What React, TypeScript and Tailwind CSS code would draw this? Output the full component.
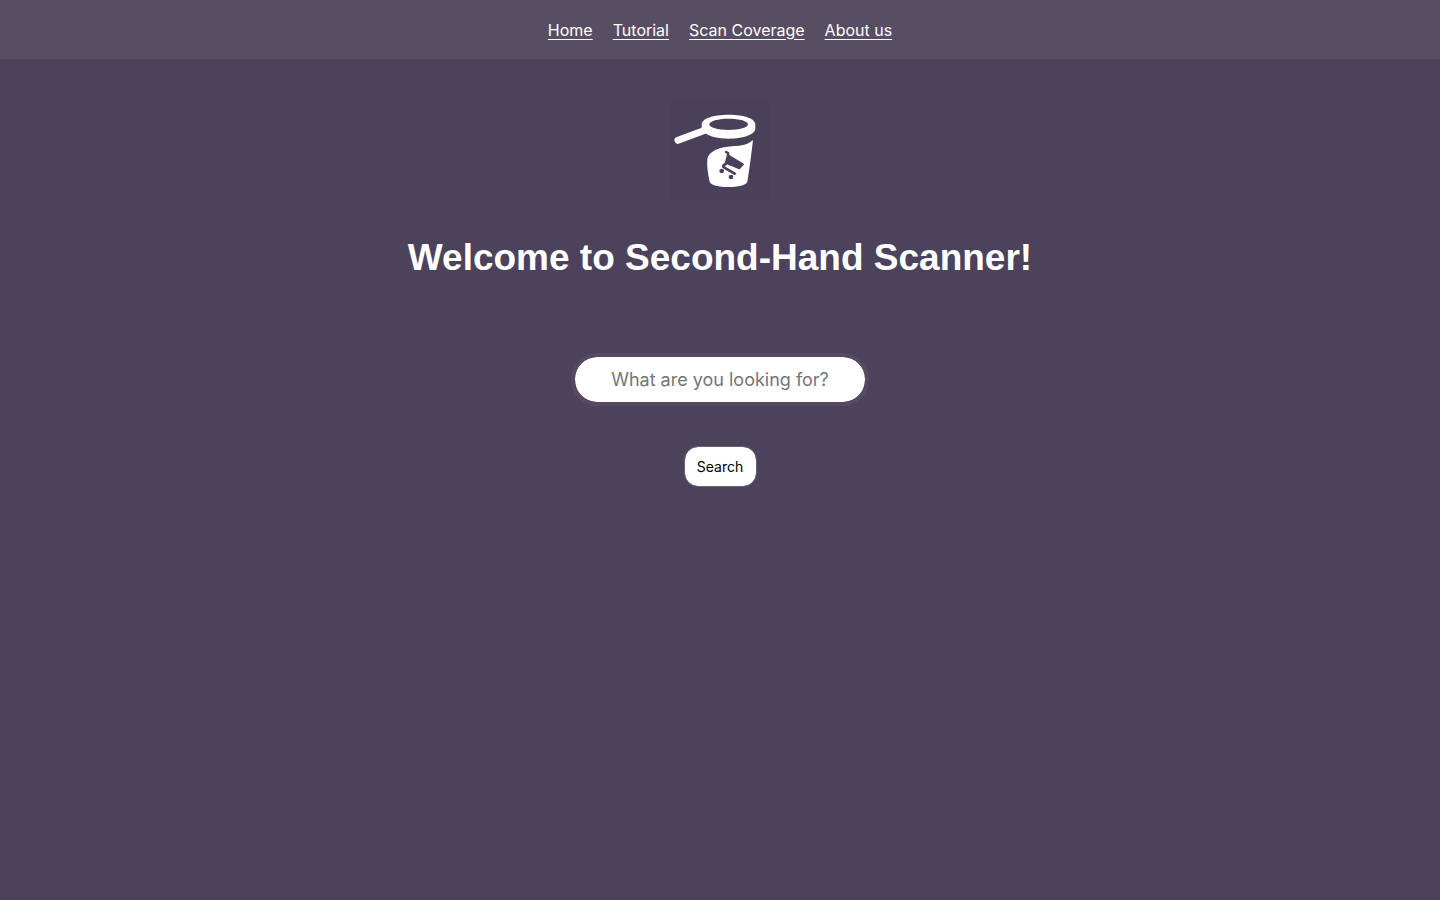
const links = [
  { label: "Home", href: "#home" },
  { label: "Tutorial", href: "#tutorial" },
  { label: "Scan Coverage", href: "#coverage" },
  { label: "About us", href: "#about" },
];

function Logo() {
  return (
    <svg
      role="img"
      aria-label="Second-Hand Scanner"
      viewBox="15 15 300 300"
      className="size-25 bg-[#4a4059]"
    >
      {/* magnifier */}
      <path d="M39 136 L122 105" stroke="#fff" strokeWidth="21" strokeLinecap="round" />
      <path
        fill="#fff"
        fillRule="evenodd"
        d="M191 59C237 59 271 70 271 89V100C271 119 236 131 191 131C160 131 134 125 122 115C113 112 110 107 110 100V89C110 70 145 59 191 59ZM191 71C158 71 133 78 133 88C133 98 158 105 191 105C224 105 249 98 249 88C249 78 224 71 191 71Z"
      />
      {/* bin */}
      <path
        fill="#fff"
        d="M264 135C260 170 253 224 247 260C244 270 219 276 190 276C161 276 137 270 134 260C129 238 125 213 127 192C131 174 151 162 177 157C206 151 242 157 264 135Z"
      />
      {/* cart */}
      <g stroke="#4a4059" fill="none" strokeLinecap="round" strokeLinejoin="round">
        <path d="M183 171L190 175L188 184L182 207" strokeWidth="7" />
        <path d="M190 180L235 208L223 221L185 205Z" fill="#4a4059" strokeWidth="4" />
        <path d="M181 208C174 209 173 215 178 218L209 236" strokeWidth="8" />
      </g>
      <circle cx="170" cy="228" r="7" fill="#4a4059" />
      <circle cx="198" cy="246" r="7" fill="#4a4059" />
    </svg>
  );
}

export default function App() {
  return (
    <div className="flex min-h-screen flex-col bg-[#4c425b] font-['Inter',sans-serif] text-white">
      <nav className="flex h-[59px] items-center justify-center gap-5 bg-[#584e63]">
        {links.map((link) => (
          <a key={link.href} href={link.href} className="text-base underline underline-offset-3">
            {link.label}
          </a>
        ))}
      </nav>
      <main className="flex grow flex-col items-center pt-[41px]">
        <Logo />
        <h1 className="mt-9 text-center font-['Liberation_Sans',sans-serif] text-[37px] leading-11 font-bold">
          Welcome to Second-Hand Scanner!
        </h1>
        <form className="mt-[73px] flex flex-col items-center gap-10" onSubmit={(e) => e.preventDefault()}>
          <input
            type="text"
            aria-label="What are you looking for?"
            placeholder="What are you looking for?"
            className="h-[53px] w-[298px] rounded-[26px] border-4 border-[#554a60] bg-white bg-clip-padding text-center text-lg text-black outline-none placeholder:text-[#757575]"
          />
          <button
            type="submit"
            className="h-[41px] w-[73px] rounded-[14px] border border-[#6a6175] bg-white bg-clip-padding text-center text-sm text-black"
          >
            Search
          </button>
        </form>
      </main>
      <footer className="h-1 bg-[#4a4059]" />
    </div>
  );
}
